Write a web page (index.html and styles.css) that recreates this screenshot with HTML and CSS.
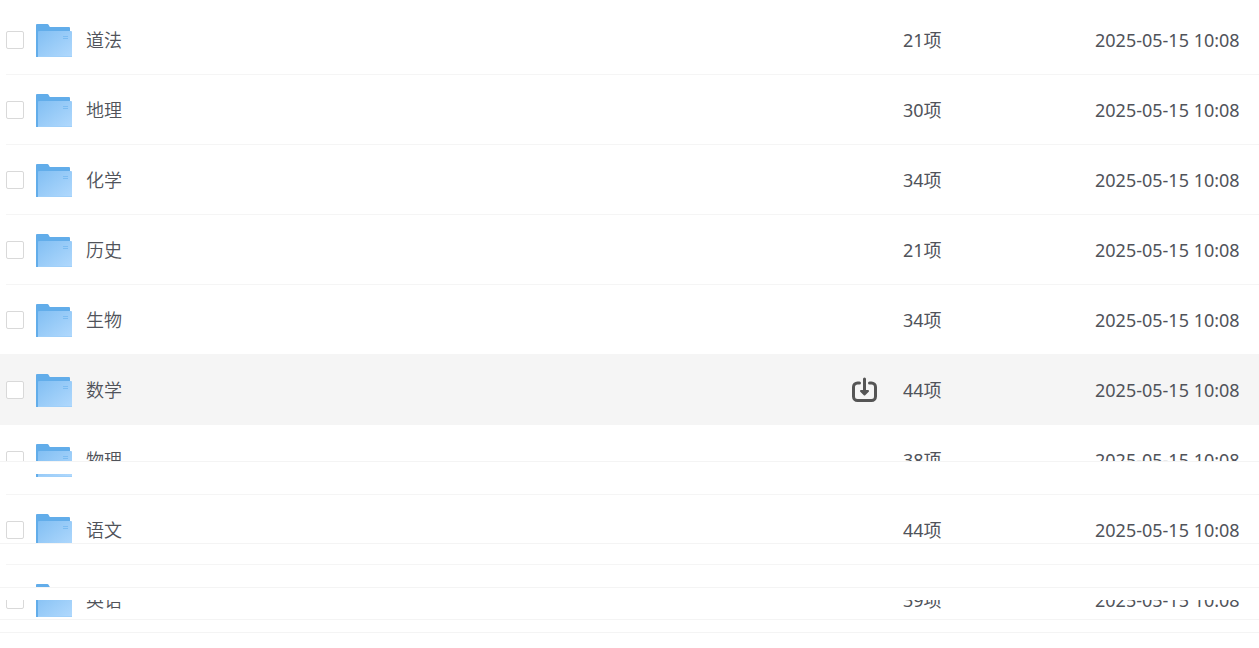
FILE: index.html
```
<!DOCTYPE html>
<html lang="zh-CN">
<head>
    <meta charset="UTF-8">
    <title>文件列表</title>
    <link rel="stylesheet" href="styles.css">
</head>
<body>

<!-- 公用图标 -->
<svg class="icons" width="0" height="0">
    <defs>
        <linearGradient id="front" x1="0" y1="0" x2="1" y2="1">
            <stop offset="0" stop-color="#82bff3"/>
            <stop offset="1" stop-color="#b1d9fd"/>
        </linearGradient>
        <symbol id="folder" viewBox="0 0 36 33">
            <path fill="#62adea" d="M0 33V1q0-1 1-1h10.500q1 0 1.500 1.500t1.500 1.500H33q1 0 1 1v29z"/>
            <path fill="url(#front)" d="M2 8q0-1 1-1h32q1 0 1 1v25H2z"/>
            <path fill="#a0d0fa" d="M2 32h34v1H2z"/>
            <path fill="#7bbcf2" d="M27 12h5v1h-5zM27 14h5v1h-5z"/>
        </symbol>
    </defs>
</svg>

<table class="filelist">
    <tbody>
        <tr>
            <td class="check"><input type="checkbox" aria-label="道法"></td>
            <td class="icon"><svg><use href="#folder"/></svg></td>
            <td class="name">道法</td>
            <td class="tool"></td>
            <td class="size">21项</td>
            <td class="time">2025-05-15 10:08</td>
        </tr>
        <tr>
            <td class="check"><input type="checkbox" aria-label="地理"></td>
            <td class="icon"><svg><use href="#folder"/></svg></td>
            <td class="name">地理</td>
            <td class="tool"></td>
            <td class="size">30项</td>
            <td class="time">2025-05-15 10:08</td>
        </tr>
        <tr>
            <td class="check"><input type="checkbox" aria-label="化学"></td>
            <td class="icon"><svg><use href="#folder"/></svg></td>
            <td class="name">化学</td>
            <td class="tool"></td>
            <td class="size">34项</td>
            <td class="time">2025-05-15 10:08</td>
        </tr>
        <tr>
            <td class="check"><input type="checkbox" aria-label="历史"></td>
            <td class="icon"><svg><use href="#folder"/></svg></td>
            <td class="name">历史</td>
            <td class="tool"></td>
            <td class="size">21项</td>
            <td class="time">2025-05-15 10:08</td>
        </tr>
        <tr>
            <td class="check"><input type="checkbox" aria-label="生物"></td>
            <td class="icon"><svg><use href="#folder"/></svg></td>
            <td class="name">生物</td>
            <td class="tool"></td>
            <td class="size">34项</td>
            <td class="time">2025-05-15 10:08</td>
        </tr>
        <tr class="active">
            <td class="check"><input type="checkbox" aria-label="数学"></td>
            <td class="icon"><svg><use href="#folder"/></svg></td>
            <td class="name">数学</td>
            <td class="tool">
                <button type="button" class="download" aria-label="下载">
                    <svg viewBox="0 0 26 26" fill="none" stroke="#555" stroke-width="3">
                        <path stroke-linecap="round" d="M7.500 6H5.500a4 4 0 0 0-4 4v9.500a4 4 0 0 0 4 4h14a4 4 0 0 0 4-4V10a4 4 0 0 0-4-4H17.500"/>
                        <path stroke-linecap="round" d="M12.500 2V15"/>
                        <path fill="#555" stroke-width="2" stroke-linejoin="round" d="M9 14h7l-3.500 3.500z"/>
                    </svg>
                </button>
            </td>
            <td class="size">44项</td>
            <td class="time">2025-05-15 10:08</td>
        </tr>
        <tr>
            <td class="check"><input type="checkbox" aria-label="物理"></td>
            <td class="icon"><svg><use href="#folder"/></svg></td>
            <td class="name">物理</td>
            <td class="tool"></td>
            <td class="size">38项</td>
            <td class="time">2025-05-15 10:08<i class="strip strip-middle"></i></td>
        </tr>
        <tr>
            <td class="check"><input type="checkbox" aria-label="语文"></td>
            <td class="icon"><svg><use href="#folder"/></svg></td>
            <td class="name">语文</td>
            <td class="tool"></td>
            <td class="size">44项</td>
            <td class="time">2025-05-15 10:08<i class="strip strip-low"></i></td>
        </tr>
        <tr>
            <td class="check"><input type="checkbox" aria-label="英语"></td>
            <td class="icon"><svg><use href="#folder"/></svg></td>
            <td class="name">英语</td>
            <td class="tool"></td>
            <td class="size">39项</td>
            <td class="time">2025-05-15 10:08<i class="strip strip-high"></i><i class="strip strip-foot"></i><i class="strip strip-end"></i></td>
        </tr>
    </tbody>
</table>

</body>
</html>
```
FILE: styles.css
```
*{
    margin: 0;
    padding: 0;
    box-sizing: border-box;
}

body{
    padding-top: 5px;
    background-color: #fff;
    color: #50535a;
    font-family: "Noto Sans", "Noto Sans CJK SC", sans-serif;
    font-size: 18px;
    font-weight: 350;
    line-height: 28px;
}

.icons{
    position: absolute;
}

.filelist{
    width: 100%;
    table-layout: fixed;
    border-collapse: separate;
    border-spacing: 0;
}

.filelist tr{
    position: relative;
    height: 70px;
    background: linear-gradient(#f5f5f5, #f5f5f5) 6px 100% / 100% 1px no-repeat;
}

.filelist .active{
    background: #f5f5f5;
    box-shadow: 0 -1px #f5f5f5;
}

.filelist td{
    vertical-align: middle;
    white-space: nowrap;
}

.check{
    width: 36px;
    padding-left: 6px;
}

.check input{
    display: block;
    appearance: none;
    width: 18px;
    height: 18px;
    border: 1px solid #d9d9d9;
    border-radius: 2px;
    background-color: #fff;
}

.icon{
    width: 50px;
}

.icon svg{
    display: block;
    width: 36px;
    height: 33px;
}

.tool{
    width: 51px;
}

.download{
    display: block;
    width: 26px;
    height: 26px;
    border: 0;
    background: none;
    cursor: pointer;
}

.download svg{
    display: block;
    width: 26px;
    height: 26px;
}

.size{
    width: 192px;
}

.time{
    width: 164px;
}

.size,.time{
    font-weight: 400;
}

/* 盖在行上的白条 */
.strip{
    position: absolute;
    left: 0;
    right: 0;
    height: 13px;
    border-top: 1px solid #f4f4f4;
    background-color: #fff;
}

.strip-high{
    top: 22px;
}

.strip-middle{
    top: 36px;
}

.strip-low{
    top: 48px;
}

.strip-foot{
    top: 54px;
}

.strip-end{
    top: 67px;
}
```
